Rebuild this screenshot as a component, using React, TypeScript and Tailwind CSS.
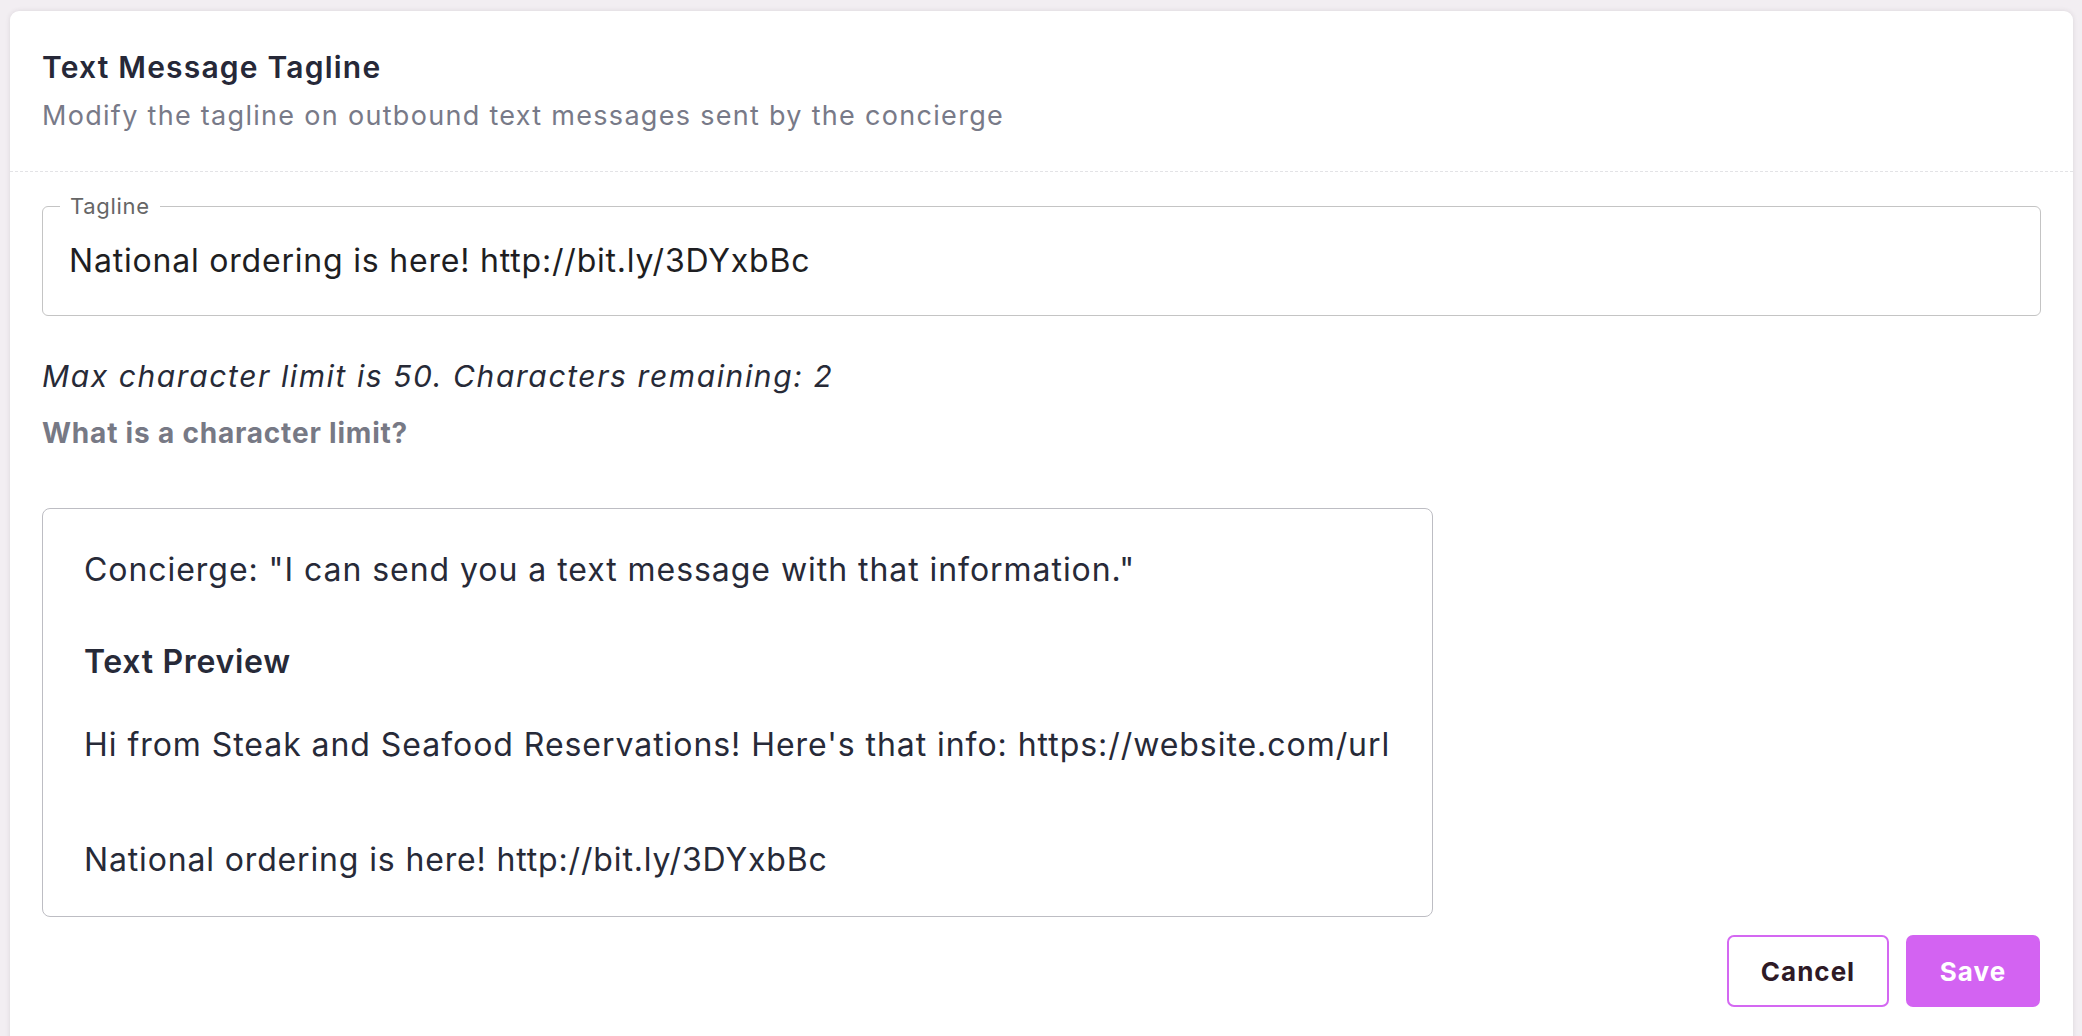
import React from "react";

const font = { fontFamily: "Inter, 'Noto Sans', sans-serif" };

export default function App() {
  return (
    <div
      className="h-screen w-full overflow-hidden bg-[#f2eef2] pl-[10px] pr-[9px] pt-[11px]"
      style={font}
    >
      <div className="rounded-[9px] bg-white pb-[60px] shadow-[0_0_5px_rgba(60,40,60,0.12)]">
        {/* Header */}
        <div className="border-b border-dashed border-[#e3e3e6] px-[32px] pb-[38px] pt-[38px]">
          <h1 className="text-[30px] font-semibold leading-[36px] tracking-[1.2px] text-[#262838]">
            Text Message Tagline
          </h1>
          <p className="mt-[14px] text-[27px] leading-[34px] tracking-[1.3px] text-[#787a88]">
            Modify the tagline on outbound text messages sent by the concierge
          </p>
        </div>

        {/* Body */}
        <div className="px-[32px] pt-[34px]">
          <div className="relative h-[110px] rounded-[6px] border border-[#c4c4c4]">
            <span className="absolute left-[17px] top-[-12px] bg-white px-[10px] text-[22px] leading-[22px] tracking-[0.7px] text-[#666666]">
              Tagline
            </span>
            <div className="flex h-full items-center pl-[26px] pr-[26px]">
              <input
                readOnly
                value="National ordering is here! http://bit.ly/3DYxbBc"
                className="w-full bg-transparent text-[32px] leading-[40px] tracking-[0.8px] text-[#1e1e22] outline-none"
              />
            </div>
          </div>

          <p className="mt-[42px] text-[30px] italic leading-[36px] tracking-[1.6px] text-[#272a37]">
            Max character limit is 50. Characters remaining: 2
          </p>
          <p className="mt-[23px] text-[28px] font-bold leading-[32px] tracking-[0.8px] text-[#777985]">
            What is a character limit?
          </p>

          <div className="mt-[59px] w-[1391px] rounded-[8px] border border-[#bdbdc3] pb-[36px] pl-[41px] pt-[41px] text-[32px] leading-[40px] tracking-[0.95px] text-[#272a38]">
            <p>Concierge: "I can send you a text message with that information."</p>
            <p className="mt-[52px] font-semibold tracking-[0.7px]">Text Preview</p>
            <p className="mt-[43px]">
              Hi from Steak and Seafood Reservations! Here's that info: https://website.com/url
            </p>
            <p className="mt-[75px] tracking-[0.85px]">National ordering is here! http://bit.ly/3DYxbBc</p>
          </div>

          <div className="mt-[18px] flex justify-end gap-[17px] pr-[1px]">
            <button className="h-[72px] w-[162px] rounded-[7px] border-2 border-[#d468f2] bg-white text-[26px] font-bold tracking-[1px] text-[#2e1a26]">
              Cancel
            </button>
            <button className="h-[72px] w-[134px] rounded-[7px] bg-[#d363f2] text-[26px] font-bold tracking-[1px] text-white">
              Save
            </button>
          </div>
        </div>
      </div>
    </div>
  );
}
